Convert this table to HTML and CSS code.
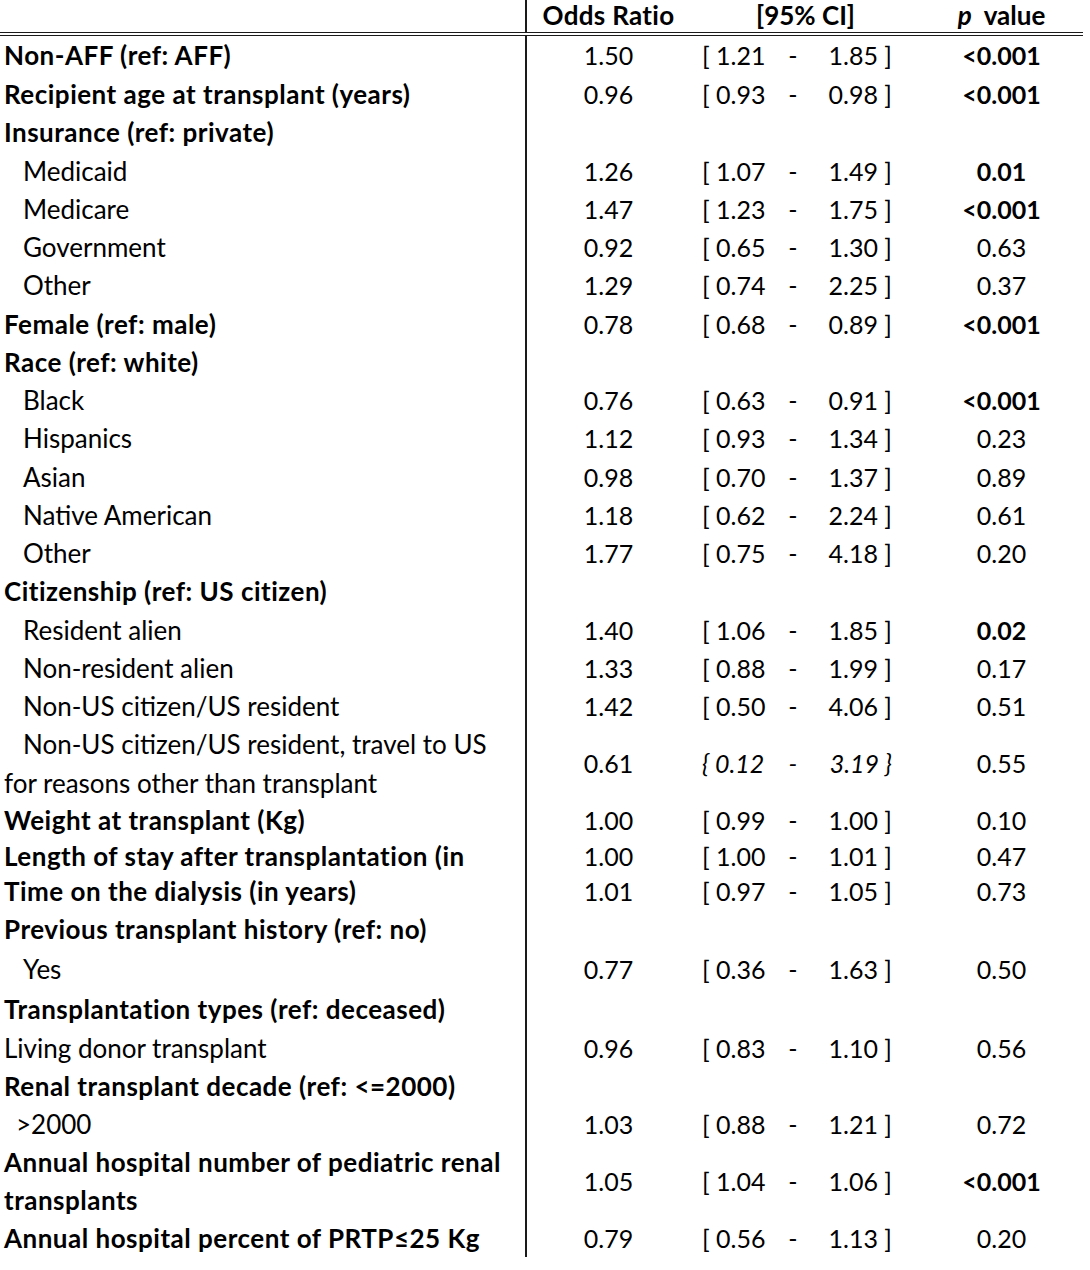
FILE: index.html
```html
<!DOCTYPE html>
<html lang="en">
<head>
<meta charset="utf-8">
<title>Odds ratios</title>
<link rel="stylesheet" href="styles.css">
</head>
<body>
<table class="or-table">
  <colgroup>
    <col class="c-label">
    <col class="c-or">
    <col class="c-ci">
    <col class="c-p">
  </colgroup>
  <thead>
    <tr class="head">
      <th class="label"></th>
      <th class="or">Odds Ratio</th>
      <th class="ci-head">[95% CI]</th>
      <th class="p"><i>p</i>&nbsp; value</th>
    </tr>
  </thead>
  <tbody>
    <tr class="r-first"><td class="label b">Non-AFF (ref: AFF)</td><td class="or">1.50</td><td class="ci"><span class="lo">[ 1.21</span><span class="dash">-</span><span class="hi">1.85 ]</span></td><td class="p b">&lt;0.001</td></tr>
    <tr><td class="label b">Recipient age at transplant (years)</td><td class="or">0.96</td><td class="ci"><span class="lo">[ 0.93</span><span class="dash">-</span><span class="hi">0.98 ]</span></td><td class="p b">&lt;0.001</td></tr>
    <tr><td class="label b">Insurance (ref: private)</td><td class="or"></td><td class="ci"></td><td class="p"></td></tr>
    <tr><td class="label ind">Medicaid</td><td class="or">1.26</td><td class="ci"><span class="lo">[ 1.07</span><span class="dash">-</span><span class="hi">1.49 ]</span></td><td class="p b">0.01</td></tr>
    <tr><td class="label ind">Medicare</td><td class="or">1.47</td><td class="ci"><span class="lo">[ 1.23</span><span class="dash">-</span><span class="hi">1.75 ]</span></td><td class="p b">&lt;0.001</td></tr>
    <tr><td class="label ind">Government</td><td class="or">0.92</td><td class="ci"><span class="lo">[ 0.65</span><span class="dash">-</span><span class="hi">1.30 ]</span></td><td class="p">0.63</td></tr>
    <tr><td class="label ind">Other</td><td class="or">1.29</td><td class="ci"><span class="lo">[ 0.74</span><span class="dash">-</span><span class="hi">2.25 ]</span></td><td class="p">0.37</td></tr>
    <tr><td class="label b">Female (ref: male)</td><td class="or">0.78</td><td class="ci"><span class="lo">[ 0.68</span><span class="dash">-</span><span class="hi">0.89 ]</span></td><td class="p b">&lt;0.001</td></tr>
    <tr><td class="label b">Race (ref: white)</td><td class="or"></td><td class="ci"></td><td class="p"></td></tr>
    <tr><td class="label ind">Black</td><td class="or">0.76</td><td class="ci"><span class="lo">[ 0.63</span><span class="dash">-</span><span class="hi">0.91 ]</span></td><td class="p b">&lt;0.001</td></tr>
    <tr><td class="label ind">Hispanics</td><td class="or">1.12</td><td class="ci"><span class="lo">[ 0.93</span><span class="dash">-</span><span class="hi">1.34 ]</span></td><td class="p">0.23</td></tr>
    <tr><td class="label ind">Asian</td><td class="or">0.98</td><td class="ci"><span class="lo">[ 0.70</span><span class="dash">-</span><span class="hi">1.37 ]</span></td><td class="p">0.89</td></tr>
    <tr><td class="label ind">Native American</td><td class="or">1.18</td><td class="ci"><span class="lo">[ 0.62</span><span class="dash">-</span><span class="hi">2.24 ]</span></td><td class="p">0.61</td></tr>
    <tr><td class="label ind">Other</td><td class="or">1.77</td><td class="ci"><span class="lo">[ 0.75</span><span class="dash">-</span><span class="hi">4.18 ]</span></td><td class="p">0.20</td></tr>
    <tr><td class="label b">Citizenship (ref: US citizen)</td><td class="or"></td><td class="ci"></td><td class="p"></td></tr>
    <tr><td class="label ind">Resident alien</td><td class="or">1.40</td><td class="ci"><span class="lo">[ 1.06</span><span class="dash">-</span><span class="hi">1.85 ]</span></td><td class="p b">0.02</td></tr>
    <tr><td class="label ind">Non-resident alien</td><td class="or">1.33</td><td class="ci"><span class="lo">[ 0.88</span><span class="dash">-</span><span class="hi">1.99 ]</span></td><td class="p">0.17</td></tr>
    <tr><td class="label ind">Non-US citizen/US resident</td><td class="or">1.42</td><td class="ci"><span class="lo">[ 0.50</span><span class="dash">-</span><span class="hi">4.06 ]</span></td><td class="p">0.51</td></tr>
    <tr class="r-two"><td class="label hang">Non-US citizen/US resident, travel to US<br>for reasons other than transplant</td><td class="or">0.61</td><td class="ci it"><span class="lo">{ 0.12</span><span class="dash">-</span><span class="hi">3.19 }</span></td><td class="p">0.55</td></tr>
    <tr class="r-w"><td class="label b">Weight at transplant (Kg)</td><td class="or">1.00</td><td class="ci"><span class="lo">[ 0.99</span><span class="dash">-</span><span class="hi">1.00 ]</span></td><td class="p">0.10</td></tr>
    <tr class="r-s"><td class="label b">Length of stay after transplantation (in</td><td class="or">1.00</td><td class="ci"><span class="lo">[ 1.00</span><span class="dash">-</span><span class="hi">1.01 ]</span></td><td class="p">0.47</td></tr>
    <tr class="r-s"><td class="label b">Time on the dialysis (in years)</td><td class="or">1.01</td><td class="ci"><span class="lo">[ 0.97</span><span class="dash">-</span><span class="hi">1.05 ]</span></td><td class="p">0.73</td></tr>
    <tr class="r-p"><td class="label b">Previous transplant history (ref: no)</td><td class="or"></td><td class="ci"></td><td class="p"></td></tr>
    <tr class="r-n"><td class="label ind">Yes</td><td class="or">0.77</td><td class="ci"><span class="lo">[ 0.36</span><span class="dash">-</span><span class="hi">1.63 ]</span></td><td class="p">0.50</td></tr>
    <tr class="r-t"><td class="label b">Transplantation types (ref: deceased)</td><td class="or"></td><td class="ci"></td><td class="p"></td></tr>
    <tr class="r-w"><td class="label">Living donor transplant</td><td class="or">0.96</td><td class="ci"><span class="lo">[ 0.83</span><span class="dash">-</span><span class="hi">1.10 ]</span></td><td class="p">0.56</td></tr>
    <tr class="r-n"><td class="label b">Renal transplant decade (ref: &lt;=2000)</td><td class="or"></td><td class="ci"></td><td class="p"></td></tr>
    <tr class="r-n"><td class="label ind2">&gt;2000</td><td class="or">1.03</td><td class="ci"><span class="lo">[ 0.88</span><span class="dash">-</span><span class="hi">1.21 ]</span></td><td class="p">0.72</td></tr>
    <tr class="r-two2"><td class="label b">Annual hospital number of pediatric renal<br>transplants</td><td class="or">1.05</td><td class="ci"><span class="lo">[ 1.04</span><span class="dash">-</span><span class="hi">1.06 ]</span></td><td class="p b">&lt;0.001</td></tr>
    <tr class="r-w"><td class="label b">Annual hospital percent of PRTP≤25 Kg</td><td class="or">0.79</td><td class="ci"><span class="lo">[ 0.56</span><span class="dash">-</span><span class="hi">1.13 ]</span></td><td class="p">0.20</td></tr>
  </tbody>
</table>
</body>
</html>
```

FILE: styles.css
```css
html, body {
  margin: 0;
  padding: 0;
  background: #fff;
}

body {
  font-family: Lato, "Open Sans", "Liberation Sans", sans-serif;
  font-size: 25px;
  color: #000;
}

.or-table {
  border-collapse: collapse;
  table-layout: fixed;
  width: 1083px;
}

.c-label { width: 526px; }
.c-or { width: 164px; }
.c-ci { width: 230px; }
.c-p { width: 163px; }

.or-table th,
.or-table td {
  padding: 0;
  white-space: nowrap;
  overflow: hidden;
  vertical-align: middle;
}

.or-table .label {
  border-right: 2px solid #1a1a1a;
  padding-left: 4px;
  text-align: left;
  font-size: 26px;
}

.or-table .label.b {
  letter-spacing: 0.5px;
}

.head th {
  height: 32px;
  font-size: 26px;
  font-weight: 700;
  line-height: 30px;
  border-bottom: 4px double #1a1a1a;
  vertical-align: top;
}

.head th.or { text-align: center; letter-spacing: 0.3px; }
.head th.ci-head { text-align: left; padding-left: 66px; }
.head th.p { text-align: center; padding-left: 0; }

.or-table tbody tr { height: 38.25px; line-height: 38.25px; }
.or-table tbody tr.r-first { height: 41px; line-height: 38px; }
.or-table tbody tr.r-first td { vertical-align: top; }
.or-table tbody tr.r-two { height: 76.5px; line-height: 38.25px; }
.or-table tbody tr.r-two2 { height: 77px; line-height: 38.5px; }
.or-table tbody tr.r-w { height: 37px; line-height: 37px; }
.or-table tbody tr.r-s { height: 35px; line-height: 35px; }
.or-table tbody tr.r-p { height: 41px; line-height: 41px; }
.or-table tbody tr.r-t { height: 42px; line-height: 42px; }
.or-table tbody tr.r-n { height: 38px; line-height: 38px; }

.b { font-weight: 700; }
.or-table .label.ind { padding-left: 23px; }
.or-table .label.ind2 { padding-left: 16px; }
.or-table .label.hang { text-indent: 19px; }

td.or { text-align: center; }
td.p { text-align: center; }

td.ci {
  padding-left: 12px;
}
.ci .lo,
.ci .dash,
.ci .hi {
  display: inline-block;
}
.ci .lo { width: 80px; text-align: left; }
.ci .dash { width: 22px; text-align: center; }
.ci .hi { width: 88px; text-align: right; }
.ci.it { font-style: italic; }
```
